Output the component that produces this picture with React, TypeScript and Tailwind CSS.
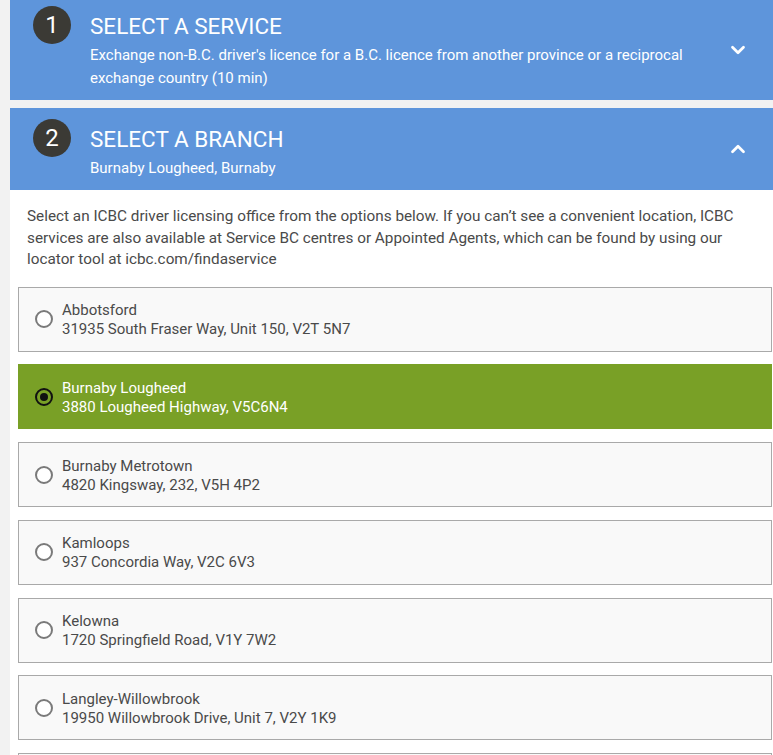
import React from 'react';
import { ChevronDown, ChevronUp } from 'lucide-react';

interface Branch {
  name: string;
  address: string;
}

const branches: Branch[] = [
  { name: 'Abbotsford', address: '31935 South Fraser Way, Unit 150, V2T 5N7' },
  { name: 'Burnaby Lougheed', address: '3880 Lougheed Highway, V5C6N4' },
  { name: 'Burnaby Metrotown', address: '4820 Kingsway, 232, V5H 4P2' },
  { name: 'Kamloops', address: '937 Concordia Way, V2C 6V3' },
  { name: 'Kelowna', address: '1720 Springfield Road, V1Y 7W2' },
  { name: 'Langley-Willowbrook', address: '19950 Willowbrook Drive, Unit 7, V2Y 1K9' },
  { name: 'Nanaimo', address: '2100 Bowen Road, V9S 1H7' },
];

const selected = 'Burnaby Lougheed';

const StepHeader: React.FC<{
  step: number;
  title: string;
  subtitle: React.ReactNode;
  open: boolean;
  className?: string;
  circleClass: string;
  titleClass: string;
  subClass: string;
}> = ({ step, title, subtitle, open, className, circleClass, titleClass, subClass }) => (
  <div className={`bg-[#5e95db] flex items-start text-white pl-[23px] pr-[24px] ${className ?? ''}`}>
    <div
      className={`w-[38px] h-[38px] rounded-full bg-[#3b3a35] flex items-center justify-center text-[24px] shrink-0 ${circleClass}`}
    >
      {step}
    </div>
    <div className="ml-[19px] flex-1">
      <div className={`text-[22.5px] leading-[26px] ${titleClass}`}>{title}</div>
      <div className={`text-[15px] leading-[23px] ${subClass}`}>{subtitle}</div>
    </div>
    <div className="self-center ml-4">
      {open ? (
        <ChevronUp className="w-[22px] h-[22px]" strokeWidth={3} />
      ) : (
        <ChevronDown className="w-[22px] h-[22px]" strokeWidth={3} />
      )}
    </div>
  </div>
);

const BranchCard: React.FC<{ branch: Branch }> = ({ branch }) => {
  const active = branch.name === selected;
  return (
    <div
      className={`h-[65px] shrink-0 flex items-center pl-[16px] border ${
        active
          ? 'bg-[#79a026] border-[#79a026] text-white'
          : 'bg-[#f9f9f9] border-[#a9a9a9] text-[#4a4a4a]'
      }`}
    >
      {active ? (
        <div className="w-[18px] h-[18px] rounded-full border-2 border-[#111] flex items-center justify-center">
          <div className="w-[8px] h-[8px] rounded-full bg-[#111]" />
        </div>
      ) : (
        <div className="w-[18px] h-[18px] rounded-full border-2 border-[#7a7a7a] bg-white" />
      )}
      <div className="ml-[9px] pt-[2px] text-[15px] leading-[19px]">
        <div>{branch.name}</div>
        <div>{branch.address}</div>
      </div>
    </div>
  );
};

export default function App() {
  return (
    <div
      className="h-screen bg-[#f2f2f2] pl-[10px] overflow-hidden"
      style={{ fontFamily: 'Roboto, "Liberation Sans", sans-serif' }}
    >
      <StepHeader
        step={1}
        title="SELECT A SERVICE"
        subtitle="Exchange non-B.C. driver's licence for a B.C. licence from another province or a reciprocal exchange country (10 min)"
        open={false}
        className="h-[100px]"
        circleClass="mt-[6px]"
        titleClass="mt-[13px]"
        subClass="mt-[5px]"
      />
      <StepHeader
        step={2}
        title="SELECT A BRANCH"
        subtitle="Burnaby Lougheed, Burnaby"
        open
        className="h-[82px] mt-[8px]"
        circleClass="mt-[11px]"
        titleClass="mt-[17.5px]"
        subClass="mt-[5.5px]"
      />
      <div className="bg-white pl-[8px] pt-[16px] pb-6">
        <p className="text-[15.3px] leading-[21.5px] text-[#4a4a4a] pl-[9px] pr-[20px]">
          Select an ICBC driver licensing office from the options below. If you can’t see a convenient location, ICBC
          services are also available at Service BC centres or Appointed Agents, which can be found by using our
          locator tool at icbc.com/findaservice
        </p>
        <div className="mt-[16px] flex flex-col gap-[12.8px] pr-[1px]">
          {branches.map((b) => (
            <BranchCard key={b.name} branch={b} />
          ))}
        </div>
      </div>
    </div>
  );
}
